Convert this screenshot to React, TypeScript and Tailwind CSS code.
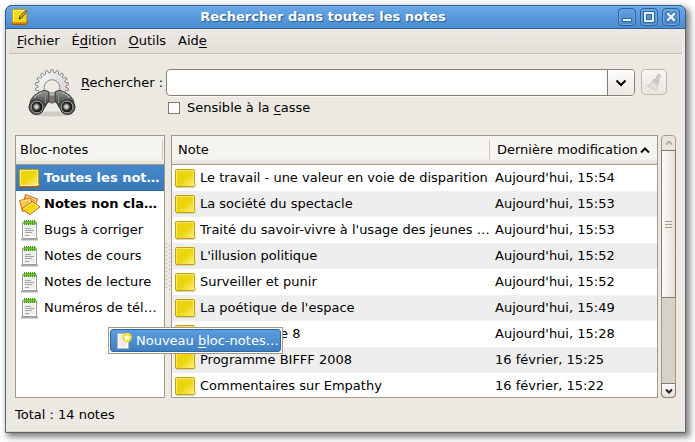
import type { ReactNode } from "react";

const notes: [string, string][] = [
  ["Le travail - une valeur en voie de disparition", "Aujourd'hui, 15:54"],
  ["La société du spectacle", "Aujourd'hui, 15:53"],
  ["Traité du savoir-vivre à l'usage des jeunes …", "Aujourd'hui, 15:53"],
  ["L'illusion politique", "Aujourd'hui, 15:52"],
  ["Surveiller et punir", "Aujourd'hui, 15:52"],
  ["La poétique de l'espace", "Aujourd'hui, 15:49"],
  ["e 8", "Aujourd'hui, 15:28"],
  ["Programme BIFFF 2008", "16 février, 15:25"],
  ["Commentaires sur Empathy", "16 février, 15:22"],
];

const notebooks = ["Bugs à corriger", "Notes de cours", "Notes de lecture", "Numéros de tél…"];

function NoteIcon() {
  return (
    <svg width="22" height="20" viewBox="0 0 22 20" className="shrink-0">
      <defs>
        <linearGradient id="sticky" x1="0" y1="0" x2="1" y2="1">
          <stop offset="0" stopColor="#efd60c" />
          <stop offset="0.5" stopColor="#ecd40a" />
          <stop offset="1" stopColor="#fdf28a" />
        </linearGradient>
      </defs>
      <path d="M1 19.5h18.500l1.500-2" stroke="#d3d3d0" fill="none" />
      <path d="M.5 2.500q0-1 1-1h17q1 0 1 1v13.500l1 .5-1.500 2H1.500q-1 0-1-1z" fill="url(#sticky)" stroke="#c79d05" />
      <path d="M1.500 17V2.500H18.500V15" fill="none" stroke="#f7e968" />
      <path d="M18 18l2.500-2" stroke="#f6e35d" />
    </svg>
  );
}

function AllNotesIcon() {
  return (
    <svg width="22" height="20" viewBox="0 0 22 20" className="shrink-0">
      <path d="M.5 17v2h18l2-2v-1.500H.5z" fill="#d66b08" stroke="#a9510a" />
      <path d="M.5 1.500h19v14l1 .5-2 1.500H.5z" fill="url(#sticky)" stroke="#c59b04" />
      <path d="M1.500 16V2.500h17V14" fill="none" stroke="#f9ec79" />
      <path d="M1 17.500h17l2-1.500" fill="none" stroke="#fbefb0" />
    </svg>
  );
}

function LooseNotesIcon() {
  return (
    <svg width="22" height="22" viewBox="0 0 22 22" className="shrink-0">
      <path d="M6.500 1.500L18.500 6l-3.500 9.500L4 11.500z" fill="#f3b45e" stroke="#d76a14" />
      <path d="M7 3l10 3.500-3 7" fill="none" stroke="#fbd89e" />
      <path d="M.5 7.500l11-2.500 3.500 9.500-11.500 4z" fill="#f0c94d" stroke="#d7740f" />
      <path d="M2 8.500l8.500-2 2.500 7" fill="none" stroke="#fcebaa" />
      <path d="M2.500 16L13.500 8.500l7.500 5.500-10 7.500z" fill="url(#sticky)" stroke="#d76a14" />
      <path d="M4.500 16L13.500 9.800l5.700 4.200" fill="none" stroke="#fbf1a0" />
    </svg>
  );
}

function NotebookIcon() {
  return (
    <svg width="18" height="22" viewBox="0 0 18 22" className="shrink-0">
      <path d="M0 20.500h17" stroke="#aaa" strokeWidth="2" />
      <path d="M1.500 3.500h14v16h-14z" fill="#eeeeec" stroke="#9a9c97" />
      <path d="M2.500 5v13.500h12V5" fill="none" stroke="#fff" />
      <path d="M2.500 2h12.500v3.500H2.500z" fill="#72c437" />
      <path d="M3.500 1v6M5.500 1v6M7.500 1v6M9.500 1v6M11.500 1v6M13.500 1v6" stroke="#4c9a1d" strokeDasharray="2 1" />
      <path d="M4 9.500h6M4 11.500h9M4 13.500h7M4 16.500h4" stroke="#a3a5a1" />
    </svg>
  );
}

function AppIcon() {
  return (
    <svg width="16" height="16" viewBox="0 0 16 16">
      <path d="M.5 12.500v3h13l2-2v-2z" fill="#e07a10" stroke="#a85a0a" />
      <path d="M.5.5h14v12l-1.500 1H.5z" fill="#f0da12" stroke="#c9a305" />
      <path d="M1.500 12V1.500h12" fill="none" stroke="#fbf07c" />
      <path d="M7 10l1-3 5.500-5.500 1.500 1L9.500 9z" fill="#b9894a" stroke="#50401c" strokeWidth="0.800" />
      <path d="M7 10.200l.7-2 1.300 1z" fill="#222" />
      <path d="M8.500 7.500L13.500 2.500" stroke="#e9c98c" strokeWidth="0.800" />
    </svg>
  );
}

function gearOutline(teeth: number, cx: number, cy: number, inner: number, outer: number) {
  const step = (Math.PI * 2) / teeth;
  const points: string[] = [];
  for (let i = 0; i < teeth; i++) {
    const a = i * step - Math.PI / 2;
    const corners: [number, number][] = [
      [inner, -0.3],
      [outer, -0.2],
      [outer, 0.2],
      [inner, 0.3],
    ];
    for (const [r, t] of corners) {
      points.push(`${(cx + r * Math.cos(a + t * step)).toFixed(2)} ${(cy + r * Math.sin(a + t * step)).toFixed(2)}`);
    }
  }
  return `M${points.join("L")}z`;
}

function SearchArt() {
  return (
    <svg width="48" height="48" viewBox="0 0 48 48">
      <defs>
        <linearGradient id="gear" x1="0" y1="0" x2="1" y2="1">
          <stop offset="0" stopColor="#fcfcfb" />
          <stop offset="0.550" stopColor="#e0dfdf" />
          <stop offset="0.750" stopColor="#efccd9" />
          <stop offset="1" stopColor="#ddd" />
        </linearGradient>
        <linearGradient id="barrel" x1="0" y1="0" x2="0" y2="1">
          <stop offset="0" stopColor="#9da09c" />
          <stop offset="0.500" stopColor="#5d615d" />
          <stop offset="1" stopColor="#343734" />
        </linearGradient>
        <radialGradient id="lens" cx="0.450" cy="0.480">
          <stop offset="0" stopColor="#ffffff" />
          <stop offset="0.350" stopColor="#9ca09d" />
          <stop offset="0.650" stopColor="#232624" />
          <stop offset="1" stopColor="#0d0f0e" />
        </radialGradient>
      </defs>
      <path d={gearOutline(18, 24, 17.5, 14, 16.7)} fill="url(#gear)" stroke="#858783" strokeLinejoin="round" />
      <circle cx="24" cy="18.500" r="7.800" fill="#edeae4" stroke="#8b8c89" />
      <ellipse cx="24" cy="45" rx="21" ry="2.500" fill="#000" opacity=".12" />
      <path d="M20 24h8l1.500 9h-11z" fill="#777b77" stroke="#3a3d3a" />
      <path d="M21.500 23.500h5v3h-5z" fill="#b4b7b3" />
      <path d="M22 28.500h4v4h-4z" fill="#8f7279" />
      <path d="M12 23q4-3 8.500-.5l.5 9-5 8L2 34q1-7 10-11z" fill="url(#barrel)" stroke="#3a3e3a" />
      <path d="M36 23q-4-3-8.500-.5l-.5 9 5 8L46 34q-1-7-10-11z" fill="url(#barrel)" stroke="#3a3e3a" />
      <path d="M6 29q3-4 8-5.500M42 29q-3-4-8-5.500" fill="none" stroke="#c0c4bf" />
      <path d="M17.500 25v9M30.500 25v9" stroke="#868a86" />
      <circle cx="8.500" cy="38" r="7.500" fill="#4c504c" stroke="#333632" />
      <circle cx="39.500" cy="38" r="7.500" fill="#4c504c" stroke="#333632" />
      <circle cx="9" cy="38" r="5.900" fill="url(#lens)" stroke="#a6aaa5" />
      <circle cx="39" cy="38" r="5.900" fill="url(#lens)" stroke="#a6aaa5" />
    </svg>
  );
}

function TitleButton({ label, children }: { label: string; children: ReactNode }) {
  return (
    <button
      type="button"
      aria-label={label}
      className="flex size-[18px] items-center justify-center rounded-[4px] border border-[#2c5f96] bg-linear-to-b from-[#63a3e3] to-[#4787ca] shadow-[inset_0_0_0_1px_#6eabe6]"
    >
      <svg width="12" height="12" viewBox="0 0 12 12" className="shrink-0">
        {children}
      </svg>
    </button>
  );
}

function Mnemonic({ children }: { children: ReactNode }) {
  return <span className="underline decoration-1 underline-offset-2">{children}</span>;
}

const headerRow = "h-[29px] border-b border-[#a89d8c] bg-linear-to-b from-[#f6f4f1] from-80% to-[#e4e0d8] text-left";

export default function App() {
  return (
    <div className="bg-white pt-[5px] pr-[9px] pb-[9px] pl-[5px] font-['DejaVu_Sans',sans-serif] text-[13px] leading-4 text-black">
      <main className="rounded-t-[7px] border border-[#606468] bg-[#ece9e2] shadow-[3px_3px_6px_1px_rgba(0,0,0,0.5)]">
        <header className="-mx-px -mt-px flex h-6 items-center rounded-t-[7px] border border-[#30608f] bg-linear-to-b from-[#68a8e8] to-[#4b8ccf] pr-[5px] pl-[6px] shadow-[inset_0_1px_0_#7db5ec]">
          <AppIcon />
          <h1 className="flex-1 text-center font-bold text-white [text-shadow:1px_1px_1px_#24588f]">
            Rechercher dans toutes les notes
          </h1>
          <div className="flex gap-1">
            <TitleButton label="Réduire">
              <path d="M1.500 7.500h9v3h-9z" fill="#e9f2fb" stroke="#2f67a3" />
            </TitleButton>
            <TitleButton label="Agrandir">
              <path d="M2 2h8v8H2z" fill="none" stroke="#2f67a3" strokeWidth="4" />
              <path d="M2 2h8v8H2z" fill="none" stroke="#e6f0fa" strokeWidth="2" />
            </TitleButton>
            <TitleButton label="Fermer">
              <path d="M3 3l6 6M9 3L3 9" stroke="#2f67a3" strokeWidth="4.500" strokeLinecap="square" />
              <path d="M3 3l6 6M9 3L3 9" stroke="#e9f2fb" strokeWidth="2.500" strokeLinecap="square" />
            </TitleButton>
          </div>
        </header>

        <nav className="mx-[3px] flex h-[25px] items-center gap-3 border-b border-[#c9c1b0] bg-linear-to-b from-[#ece8e3] to-[#e4dfd9] pl-2">
          <button type="button"><Mnemonic>F</Mnemonic>ichier</button>
          <button type="button">É<Mnemonic>d</Mnemonic>ition</button>
          <button type="button"><Mnemonic>O</Mnemonic>utils</button>
          <button type="button">Aid<Mnemonic>e</Mnemonic></button>
        </nav>

        <form className="flex pt-[15px] pr-[18px] pb-[18px] pl-[22px]">
          <div className="mr-[5px] h-12 shrink-0">
            <SearchArt />
          </div>
          <label htmlFor="query" className="h-[27px] w-[85px] shrink-0 leading-[27px]">
            <Mnemonic>R</Mnemonic>echercher :
          </label>
          <div className="flex-1">
            <div className="flex gap-[6px]">
              <div className="flex h-[27px] flex-1 rounded-[4px] border border-[#8a7f72] bg-white shadow-[0_1px_0_#fbfaf8]">
                <input id="query" type="text" className="min-w-0 flex-1 rounded-l-[4px] px-1 outline-none" />
                <button
                  type="button"
                  aria-label="Recherches récentes"
                  className="flex w-[27px] items-center justify-center rounded-r-[3px] border-l border-[#8a7f72] bg-linear-to-b from-[#fdfdfc] to-[#ebe7e1]"
                >
                  <svg width="12" height="8" viewBox="0 0 12 8">
                    <path d="M1.500 1.500L6 6l4.500-4.500" fill="none" stroke="#000" strokeWidth="2" />
                  </svg>
                </button>
              </div>
              <button
                type="button"
                aria-label="Effacer"
                disabled
                className="flex h-[26px] w-[26px] items-center justify-center rounded-[4px] border border-[#c0b7aa] bg-linear-to-b from-[#f8f6f4] to-[#e9e5df]"
              >
                <svg width="16" height="18" viewBox="0 0 16 18">
                  <path d="M9.500 7l2-5q2-2 3 .5L12 8z" fill="#d6d3cf" stroke="#bebbb6" />
                  <path d="M8 6.500l5 2.500-1 2.500-5.500-3z" fill="#d0cdc8" stroke="#c2bfba" />
                  <path d="M6.500 8.500l5 3q0 3-1.500 5.500-5-1-9-4.500 3.500-1 5.500-4z" fill="#e6e3df" stroke="#cbc8c3" />
                  <path d="M4 13.500l3-3M7 15l2-3" stroke="#cbc8c3" />
                </svg>
              </button>
            </div>
            <div className="flex items-center gap-[7px] pt-1 pl-[2px]">
              <input
                id="case"
                type="checkbox"
                className="size-3 appearance-none border border-[#85796c] bg-white checked:bg-[#4a8dcf]"
              />
              <label htmlFor="case">
                Sensible à la <Mnemonic>c</Mnemonic>asse
              </label>
            </div>
          </div>
        </form>

        <section className="relative flex h-[263px] px-[9px]">
          <div className="w-[150px] shrink-0 overflow-hidden border border-[#a3998a] bg-white">
            <table className="w-full table-fixed border-separate border-spacing-0">
              <thead>
                <tr>
                  <th className={`${headerRow} p-0 font-normal`}>
                    <div className="mr-px flex h-5 items-center border-r border-[#cfc8bb] pl-1">Bloc-notes</div>
                  </th>
                </tr>
              </thead>
              <tbody className="whitespace-nowrap">
                <tr>
                  <td className="h-[26px] border-b border-[#3268a0] bg-linear-to-b from-[#4588cb] to-[#3a78b6] p-0 font-bold text-white">
                    <div className="flex items-center gap-[3px] pl-[3px]"><AllNotesIcon />Toutes les not…</div>
                  </td>
                </tr>
                <tr>
                  <td className="h-[26px] p-0 font-bold">
                    <div className="flex items-center gap-[3px] pl-[3px]"><LooseNotesIcon />Notes non cla…</div>
                  </td>
                </tr>
                {notebooks.map((name) => (
                  <tr key={name}>
                    <td className="h-[26px] p-0">
                      <div className="flex items-center gap-[5px] pl-[5px]"><NotebookIcon />{name}</div>
                    </td>
                  </tr>
                ))}
              </tbody>
            </table>
          </div>

          <div className="flex w-[6px] shrink-0 items-center justify-center">
            <svg width="4" height="48" viewBox="0 0 4 48">
              <path d="M.5 0v48" stroke="#aaa293" strokeDasharray="1 3" />
              <path d="M3.500 2v46" stroke="#aaa293" strokeDasharray="1 3" />
            </svg>
          </div>

          <div className="min-w-0 flex-1 overflow-hidden border border-[#a3998a] bg-white">
            <table className="w-full table-fixed border-separate border-spacing-0">
              <thead>
                <tr>
                  <th className={`${headerRow} p-0 font-normal`}>
                    <div className="flex h-5 items-center border-r border-[#cfc8bb] pl-[6px]">Note</div>
                  </th>
                  <th className={`${headerRow} w-[167px] p-0 font-normal`} aria-sort="descending">
                    <div className="flex items-center gap-[2px] pl-[7px] whitespace-nowrap">
                      Dernière modification
                      <svg width="10" height="7" viewBox="0 0 10 7">
                        <path d="M1 5.500l4-4 4 4" fill="none" stroke="#111" strokeWidth="2" />
                      </svg>
                    </div>
                  </th>
                </tr>
              </thead>
              <tbody className="whitespace-nowrap">
                {notes.map(([title, date]) => (
                  <tr key={title} className="even:bg-[#eeeeee]">
                    <td className="h-[26px] p-0">
                      <div className="flex items-center gap-[3px] pl-[3px]">
                        <NoteIcon />
                        <span className={title === "e 8" ? "pl-[80px]" : ""}>{title}</span>
                      </div>
                    </td>
                    <td className="h-[26px] py-0 pr-0 pl-[5px]">{date}</td>
                  </tr>
                ))}
              </tbody>
            </table>
          </div>

          <div className="ml-[3px] flex w-[15px] shrink-0 flex-col rounded-[4px] border border-[#a3998a] bg-[#d8d1c5]">
            <button type="button" aria-label="Défiler vers le haut" className="flex h-[14px] items-center justify-center rounded-t-[3px] bg-[#e9e5de]">
              <svg width="8" height="6" viewBox="0 0 8 6">
                <path d="M1 4.500l3-3 3 3" fill="none" stroke="#aaa294" strokeWidth="1.500" />
              </svg>
            </button>
            <div className="-mx-px flex h-[148px] flex-col items-center justify-center gap-[2px] border border-[#867b6c] bg-linear-to-r from-[#fbfaf9] to-[#e5e0d9]">
              <span className="h-px w-[7px] bg-[#a79e90]" />
              <span className="h-px w-[7px] bg-[#a79e90]" />
              <span className="h-px w-[7px] bg-[#a79e90]" />
            </div>
            <div className="flex-1" />
            <button type="button" aria-label="Défiler vers le bas" className="-mx-px -mb-px flex h-[15px] items-center justify-center rounded-b-[4px] border border-[#867b6c] bg-linear-to-b from-[#fbfaf9] to-[#e5e0d9]">
              <svg width="8" height="6" viewBox="0 0 8 6">
                <path d="M1 1.500l3 3 3-3" fill="none" stroke="#222" strokeWidth="2" />
              </svg>
            </button>
          </div>

          <div role="menu" className="absolute top-[192px] left-[102px] w-[175px] border border-[#a3998a] bg-white p-px">
            <button
              type="button"
              role="menuitem"
              className="flex h-[23px] w-full items-center gap-1 rounded-[3px] border border-[#2d68a4] bg-linear-to-b from-[#5b9ddf] to-[#4080c2] pl-[5px] whitespace-nowrap text-white"
            >
              <svg width="16" height="16" viewBox="0 0 16 16" className="shrink-0">
                <path d="M1.500.5h11v15h-11z" fill="#ededeb" stroke="#b4b6b1" />
                <path d="M2.500 1.500h9v13h-9z" fill="none" stroke="#fff" />
                <circle cx="11" cy="4.500" r="4.800" fill="#f4dc25" />
                <path d="M11 1l1.100 2.300 2.500.4-1.800 1.800.4 2.500-2.200-1.200L8.800 8l.4-2.500-1.800-1.800 2.500-.4z" fill="#fffef0" />
              </svg>
              <span>Nouveau <Mnemonic>b</Mnemonic>loc-notes…</span>
            </button>
          </div>
        </section>

        <footer className="flex h-[34px] items-center border-b border-[#d3d7d3] px-[9px]">Total : 14 notes</footer>
      </main>
    </div>
  );
}
